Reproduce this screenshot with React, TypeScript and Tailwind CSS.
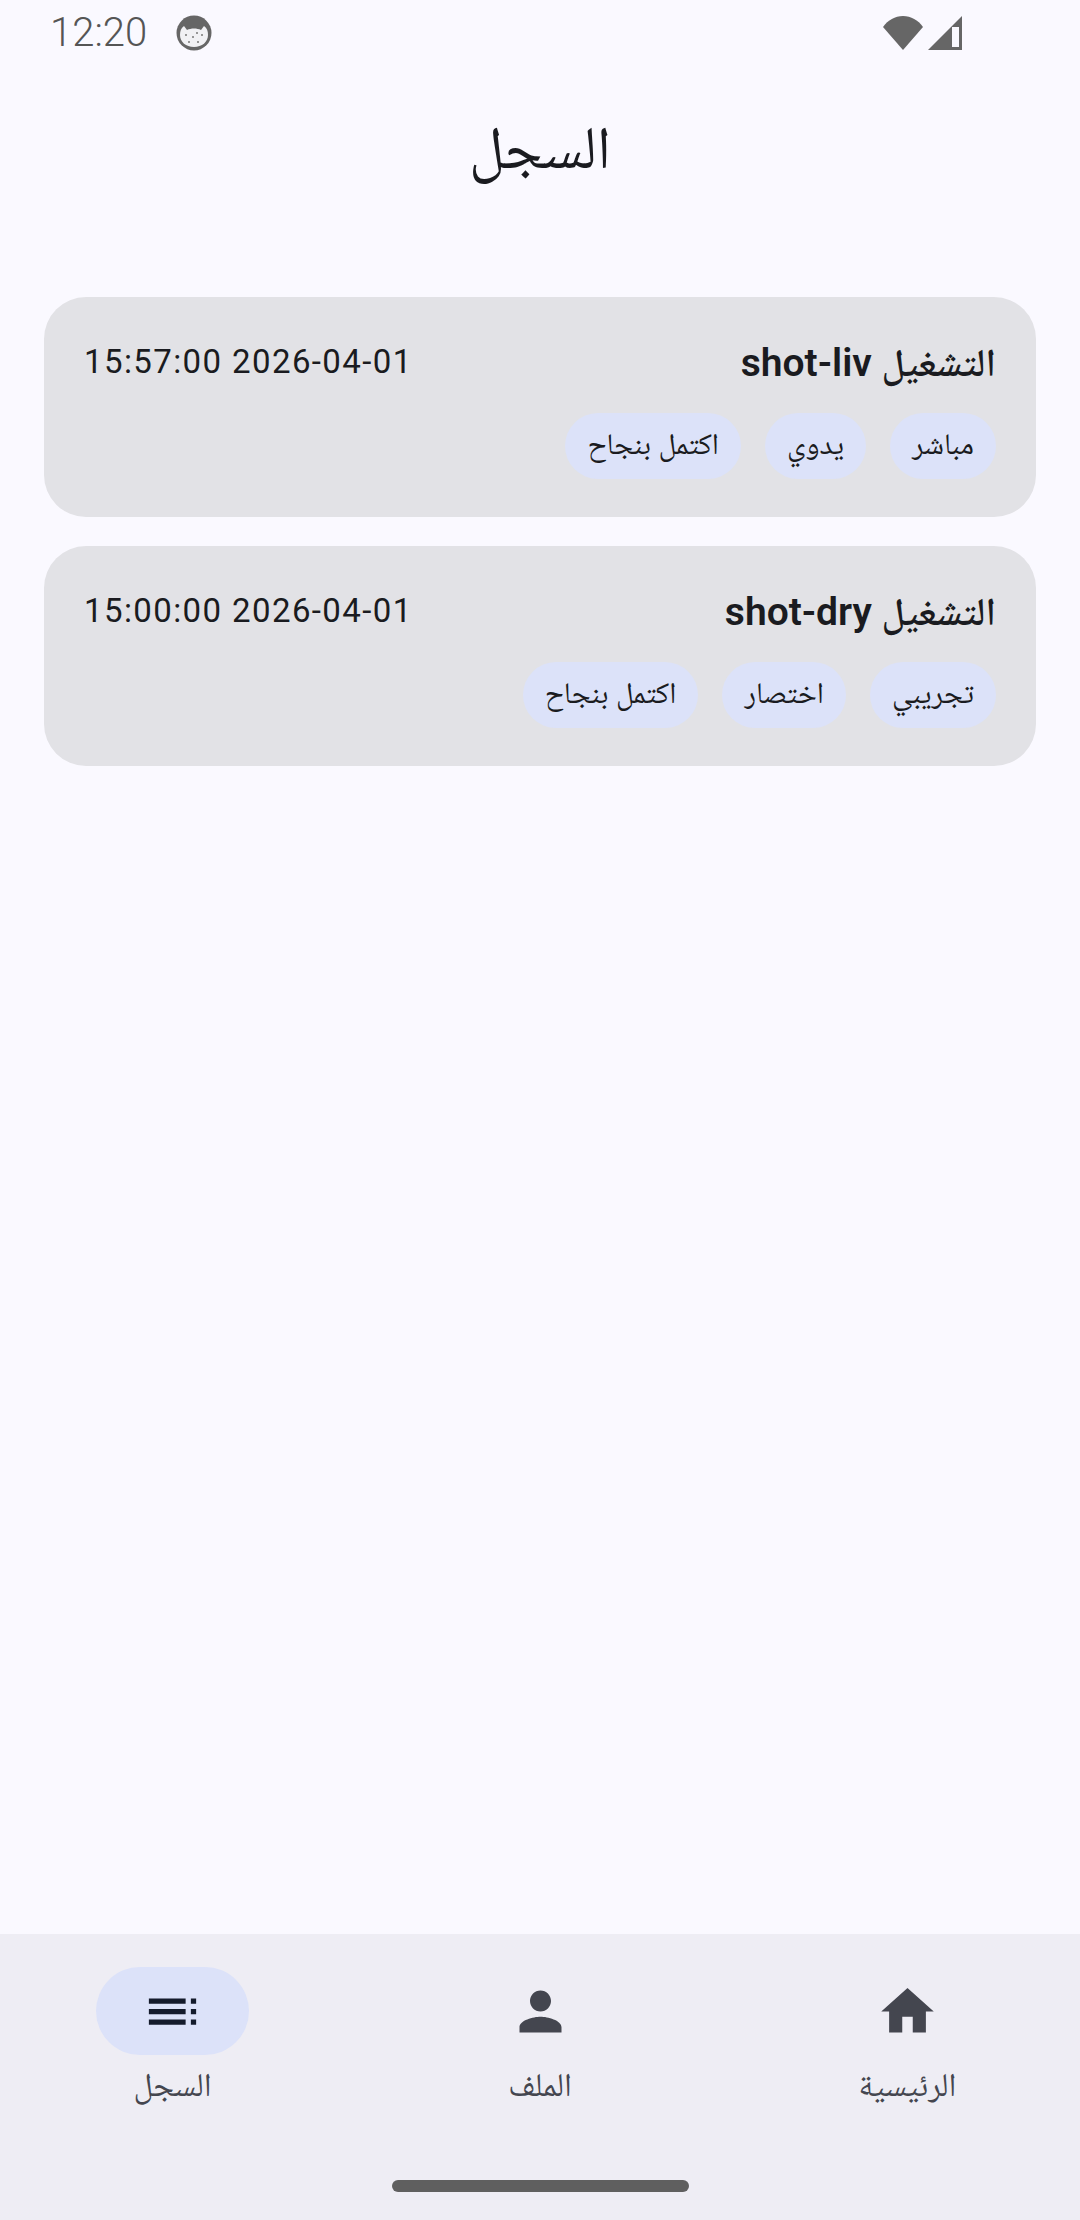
const arabicFont = "font-['Roboto','Noto_Naskh_Arabic','Noto_Sans_Arabic','DejaVu_Sans',sans-serif]";

type Run = {
  title: string;
  date: string;
  chips: string[];
};

const runs: Run[] = [
  { title: 'التشغيل shot-liv', date: '2026-04-01 15:57:00', chips: ['مباشر', 'يدوي', 'اكتمل بنجاح'] },
  { title: 'التشغيل shot-dry', date: '2026-04-01 15:00:00', chips: ['تجريبي', 'اختصار', 'اكتمل بنجاح'] },
];

const StatusBar = () => (
  <div className="flex h-[66px] shrink-0 items-center justify-between pl-[50px] pr-[118px]">
    <div className="flex items-center gap-[29px]">
      <span className="font-['Roboto',sans-serif] text-[40px] font-light leading-none text-[#555555]">12:20</span>
      <svg width="36" height="36" viewBox="0 0 36 36">
        <circle cx="18" cy="18" r="17.5" fill="#666666" />
        <path d="M4 20c0-4 1-7 4-9l3 4c4-2 10-2 14 0l3-4c3 2 4 5 4 9 0 7-6 12-14 12S4 27 4 20z" fill="#f1f1f4" />
        <g fill="#777777">
          <circle cx="10" cy="20" r="1" />
          <circle cx="17" cy="22" r="1" />
          <circle cx="26" cy="20" r="1" />
          <circle cx="13" cy="27" r="1" />
          <circle cx="22" cy="27" r="1" />
          <circle cx="21" cy="18" r="1" />
        </g>
      </svg>
    </div>
    <div className="flex items-center gap-[5px]">
      <svg width="40" height="34" viewBox="0 0 40 34">
        <path d="M0 11C5 4 12 0 20 0s15 4 20 11L20 34z" fill="#666666" />
      </svg>
      <svg width="34" height="34" viewBox="0 0 34 34">
        <path d="M34 0v34H0z" fill="#666666" />
        <path d="M24 11h7v20h-7z" fill="#faf9ff" />
      </svg>
    </div>
  </div>
);

const RunCard = ({ run }: { run: Run }) => (
  <div className="h-[220px] rounded-[42px] bg-[#e2e2e6] px-[40px] pt-[40px]" dir="rtl">
    <div className="flex h-[50px] items-center justify-between">
      <div className={`${arabicFont} pt-[2px] text-[39px] font-semibold leading-none text-[#1a1b20]`}>{run.title}</div>
      <div className="pb-[2px] font-['Roboto',sans-serif] text-[33px] leading-none tracking-[1.4px] text-[#1a1b20]">{run.date}</div>
    </div>
    <div className="mt-[26px] flex gap-[24px]">
      {run.chips.map((chip, i) => (
        <span
          key={i}
          className={`${arabicFont} flex h-[66px] items-center rounded-full bg-[#dce2f9] px-[22px] pb-[5px] text-[30px] text-[#1a1b20]`}
        >
          {chip}
        </span>
      ))}
    </div>
  </div>
);

const NavItem = ({ label, d, active }: { label: string; d: string; active?: boolean }) => (
  <div className="flex w-[153px] flex-col items-center">
    <div className={`flex h-[88px] w-[153px] items-center justify-center rounded-full ${active ? 'bg-[#dce2f9]' : ''}`}>
      <svg width="63" height="63" viewBox="0 0 24 24" fill={active ? '#141b2c' : '#44464f'}>
        <path d={d} />
      </svg>
    </div>
    <span className={`${arabicFont} mt-[8px] whitespace-nowrap text-[33px] leading-[44px] text-[#44464f]`}>{label}</span>
  </div>
);

export default function App() {
  return (
    <div className="flex h-[2220px] w-[1080px] flex-col overflow-hidden bg-[#faf9ff]">
      <StatusBar />
      <div className={`${arabicFont} flex h-[148px] shrink-0 items-center justify-center pt-[16px] text-[60px] leading-none text-[#1a1b20]`}>
        السجل
      </div>
      <div className="flex flex-1 flex-col gap-[29px] px-[44px] pt-[83px]">
        {runs.map(run => (
          <RunCard key={run.title} run={run} />
        ))}
      </div>
      <div className="flex h-[286px] shrink-0 flex-col bg-[#eeedf4]">
        <div className="flex flex-row-reverse justify-between px-[96px] pt-[33px]">
          <NavItem label="الرئيسية" d="M10 20v-6h4v6h5v-8h3L12 3 2 12h3v8z" />
          <NavItem
            label="الملف"
            d="M12 12c2.21 0 4-1.79 4-4s-1.79-4-4-4-4 1.79-4 4 1.79 4 4 4zm0 2c-2.67 0-8 1.34-8 4v2h16v-2c0-2.66-5.33-4-8-4z"
          />
          <NavItem
            label="السجل"
            d="M21 13h-2v-2h2v2zm0 4h-2v-2h2v2zm0-8h-2V7h2v2zm-4 4H3v-2h14v2zm0 4H3v-2h14v2zM17 7v2H3V7h14z"
            active
          />
        </div>
        <div className="mx-auto mt-[73px] h-[12px] w-[297px] rounded-full bg-[#5f5f5f]" />
      </div>
    </div>
  );
}
